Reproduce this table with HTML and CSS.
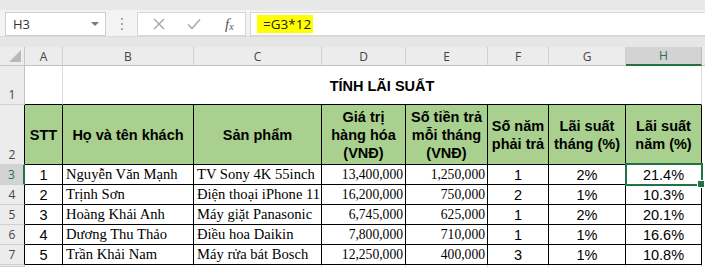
FILE: index.html
```html
<!DOCTYPE html>
<html lang="vi">
<head>
<meta charset="utf-8">
<title>Tính lãi suất</title>
<link rel="stylesheet" href="styles.css">
</head>
<body>
<div class="app">
  <div class="ribbon-edge"></div>
  <div class="fbar">
    <div class="namebox"><span class="nb-text">H3</span><span class="nb-arrow"></span></div>
    <div class="grip"><i></i><i></i><i></i></div>
    <div class="fxgroup">
      <svg class="ic ic-x" width="12" height="12" viewBox="0 0 12 12"><path d="M1 1L11 11M11 1L1 11" stroke="#a6a6a6" stroke-width="1.4" fill="none"/></svg>
      <svg class="ic ic-check" width="14" height="12" viewBox="0 0 14 12"><path d="M1 6.5L5 10.5L13 1.5" stroke="#a6a6a6" stroke-width="1.4" fill="none"/></svg>
      <span class="fx">f<sub>x</sub></span>
    </div>
    <div class="formula"><span class="hl">=G3*12</span></div>
  </div>
  <div class="band"></div>
  <div class="sheet">
    <!-- column headers -->
    <div class="corner"><span class="tri"></span></div>
    <div class="ch">A</div>
    <div class="ch">B</div>
    <div class="ch">C</div>
    <div class="ch">D</div>
    <div class="ch">E</div>
    <div class="ch">F</div>
    <div class="ch">G</div>
    <div class="ch ch-sel">H</div>
    <div class="ch ch-rest"></div>

    <!-- row 1 -->
    <div class="rh">1</div>
    <div class="c c1"></div>
    <div class="c c1 title">TÍNH LÃI SUẤT</div>
    <div class="rest"></div>

    <!-- row 2 -->
    <div class="rh rh-t">2</div>
    <div class="hd">STT</div>
    <div class="hd">Họ và tên khách</div>
    <div class="hd">Sản phẩm</div>
    <div class="hd">Giá trị<br>hàng hóa<br>(VNĐ)</div>
    <div class="hd">Số tiền trả<br>mỗi tháng<br>(VNĐ)</div>
    <div class="hd">Số năm<br>phải trả</div>
    <div class="hd">Lãi suất<br>tháng (%)</div>
    <div class="hd">Lãi suất<br>năm (%)</div>
    <div class="rest"></div>

    <!-- row 3 -->
    <div class="rh rh-sel">3</div>
    <div class="d num">1</div>
    <div class="d txt">Nguyễn Văn Mạnh</div>
    <div class="d txt">TV Sony 4K 55inch</div>
    <div class="d money">13,400,000</div>
    <div class="d money">1,250,000</div>
    <div class="d num">1</div>
    <div class="d num">2%</div>
    <div class="d num sel">21.4%</div>
    <div class="rest"></div>

    <!-- row 4 -->
    <div class="rh rh-t">4</div>
    <div class="d num">2</div>
    <div class="d txt">Trịnh Sơn</div>
    <div class="d txt">Điện thoại iPhone 11</div>
    <div class="d money">16,200,000</div>
    <div class="d money">750,000</div>
    <div class="d num">2</div>
    <div class="d num">1%</div>
    <div class="d num">10.3%</div>
    <div class="rest"></div>

    <!-- row 5 -->
    <div class="rh rh-t">5</div>
    <div class="d num">3</div>
    <div class="d txt">Hoàng Khải Anh</div>
    <div class="d txt">Máy giặt Panasonic</div>
    <div class="d money">6,745,000</div>
    <div class="d money">625,000</div>
    <div class="d num">1</div>
    <div class="d num">2%</div>
    <div class="d num">20.1%</div>
    <div class="rest"></div>

    <!-- row 6 -->
    <div class="rh rh-t">6</div>
    <div class="d num">4</div>
    <div class="d txt">Dương Thu Thảo</div>
    <div class="d txt">Điều hoa Daikin</div>
    <div class="d money">7,800,000</div>
    <div class="d money">710,000</div>
    <div class="d num">1</div>
    <div class="d num">1%</div>
    <div class="d num">16.6%</div>
    <div class="rest"></div>

    <!-- row 7 -->
    <div class="rh rh-t">7</div>
    <div class="d num">5</div>
    <div class="d txt">Trần Khải Nam</div>
    <div class="d txt">Máy rửa bát Bosch</div>
    <div class="d money">12,250,000</div>
    <div class="d money">400,000</div>
    <div class="d num">3</div>
    <div class="d num">1%</div>
    <div class="d num">10.8%</div>
    <div class="rest"></div>

    <!-- row 8 (partial) -->
    <div class="rh"></div>
    <div class="g"></div><div class="g"></div><div class="g"></div><div class="g"></div>
    <div class="g"></div><div class="g"></div><div class="g"></div><div class="g"></div>
    <div class="rest"></div>
  </div>
</div>
</body>
</html>
```

FILE: styles.css
```css
* { box-sizing: border-box; }
html, body { margin: 0; padding: 0; }
body {
  width: 705px;
  height: 267px;
  overflow: hidden;
  background: #ffffff;
  font-family: "Liberation Sans", Arial, sans-serif;
}
.app { display: flex; flex-direction: column; height: 267px; }

.ribbon-edge { height: 10px; background: #e8e8e8; }

.fbar {
  height: 27px;
  background: #f3f3f3;
  display: flex;
  align-items: flex-start;
  padding-top: 2px;
  padding-left: 5px;
  border-bottom: 1px solid #dadada;
}
.namebox {
  width: 101px;
  height: 24px;
  background: #fff;
  border: 1px solid #cfcfcf;
  display: flex;
  align-items: center;
  justify-content: space-between;
  padding: 0 6px 0 7px;
}
.nb-text { font-family: "Open Sans", sans-serif; font-size: 13px; color: #333; }
.nb-arrow {
  width: 0; height: 0;
  border-left: 4px solid transparent;
  border-right: 4px solid transparent;
  border-top: 4px solid #7a7a7a;
}
.grip {
  width: 31px;
  height: 24px;
  display: flex;
  flex-direction: column;
  align-items: center;
  justify-content: center;
  gap: 3px;
}
.grip i { display: block; width: 2px; height: 2px; background: #a8a8a8; }
.fxgroup {
  width: 109px;
  height: 24px;
  background: #fff;
  border: 1px solid #d6d6d6;
  display: flex;
  align-items: center;
  padding-left: 15px;
}
.ic-x { margin-right: 22px; }
.ic-check { margin-right: 24px; }
.fx {
  font-family: "Liberation Serif", serif;
  font-style: italic;
  font-size: 15px;
  color: #555;
}
.fx sub { font-size: 10px; vertical-align: -1px; }
.formula {
  flex: 1;
  height: 24px;
  margin-left: 4px;
  background: #fff;
  border: 1px solid #d6d6d6;
  border-right: none;
  display: flex;
  align-items: center;
  padding-left: 6px;
}
.hl {
  background: #ffff00;
  height: 18px;
  width: 56px;
  display: flex;
  align-items: center;
  padding-left: 6px;
  font-family: "Open Sans", sans-serif;
  font-size: 13.5px;
  color: #222;
}

.band { height: 10px; background: #e6e6e6; }

.sheet {
  flex: 1;
  display: grid;
  grid-template-columns: 25px 38px 131px 128px 84px 82px 61px 77px 76px 1fr;
  grid-template-rows: 19px 39px 60px repeat(5, 20px) 1fr;
  background: #fff;
}

.corner {
  background: #ececec;
  border-right: 1px solid #c8c8c8;
  border-bottom: 1px solid #c8c8c8;
  position: relative;
}
.tri {
  position: absolute;
  right: 3px;
  bottom: 3px;
  width: 0; height: 0;
  border-left: 12px solid transparent;
  border-bottom: 12px solid #b9b9b9;
}
.ch {
  background: #ececec;
  border-right: 1px solid #d0d0d0;
  border-bottom: 1px solid #c2c2c2;
  font-family: "Open Sans", sans-serif;
  font-size: 12px;
  color: #444;
  display: flex;
  align-items: center;
  justify-content: center;
}
.ch-sel {
  background: #d3d3d3;
  color: #217346;
  border-bottom: 2px solid #217346;
  border-right-color: #bbbbbb;
}
.ch-rest { border-right: none; background: #ececec; }

.rh {
  background: #ececec;
  border-right: 1px solid #c2c2c2;
  border-bottom: 1px solid #d0d0d0;
  font-family: "Open Sans", sans-serif;
  font-size: 12px;
  color: #444;
  display: flex;
  align-items: flex-end;
  justify-content: center;
  line-height: 16px;
  padding-bottom: 1px;
}
.rh-t { border-right-color: #000; }
.rh-sel {
  background: #d3d3d3;
  color: #217346;
  border-right: 2px solid #217346;
  align-items: center;
  padding-bottom: 0;
}

.c1 {
  border-right: 1px solid #dadada;
  border-bottom: 1px solid #000;
}
.title {
  grid-column: span 7;
  display: flex;
  align-items: center;
  justify-content: center;
  font-weight: bold;
  font-size: 14.5px;
  color: #000;
  padding-top: 2px;
}
.rest { background: #fff; }

.hd {
  background: #a9d08e;
  border-right: 1px solid #000;
  border-bottom: 1px solid #000;
  display: flex;
  align-items: center;
  justify-content: center;
  text-align: center;
  font-weight: bold;
  font-size: 14.5px;
  line-height: 18px;
  color: #000;
}

.d {
  border-right: 1px solid #000;
  border-bottom: 1px solid #000;
  display: flex;
  align-items: center;
  color: #000;
  white-space: nowrap;
  overflow: hidden;
}
.num {
  justify-content: center;
  font-family: "Liberation Sans", Arial, sans-serif;
  font-size: 14.5px;
}
.txt {
  font-family: "Liberation Serif", "Times New Roman", serif;
  font-size: 14.6px;
  padding-left: 3px;
}
.money {
  justify-content: flex-end;
  font-family: "Liberation Serif", "Times New Roman", serif;
  font-size: 13.6px;
  padding-right: 2px;
}
.sel { position: relative; overflow: visible; }
.sel::after {
  content: "";
  position: absolute;
  left: -1px;
  top: -2px;
  right: -2px;
  bottom: -2px;
  border: 2px solid #217346;
}
.sel::before {
  content: "";
  position: absolute;
  right: -4px;
  bottom: -4px;
  width: 6px;
  height: 6px;
  background: #217346;
  border: 1px solid #fff;
  z-index: 2;
}

.g {
  border-right: 1px solid #dadada;
}
```
